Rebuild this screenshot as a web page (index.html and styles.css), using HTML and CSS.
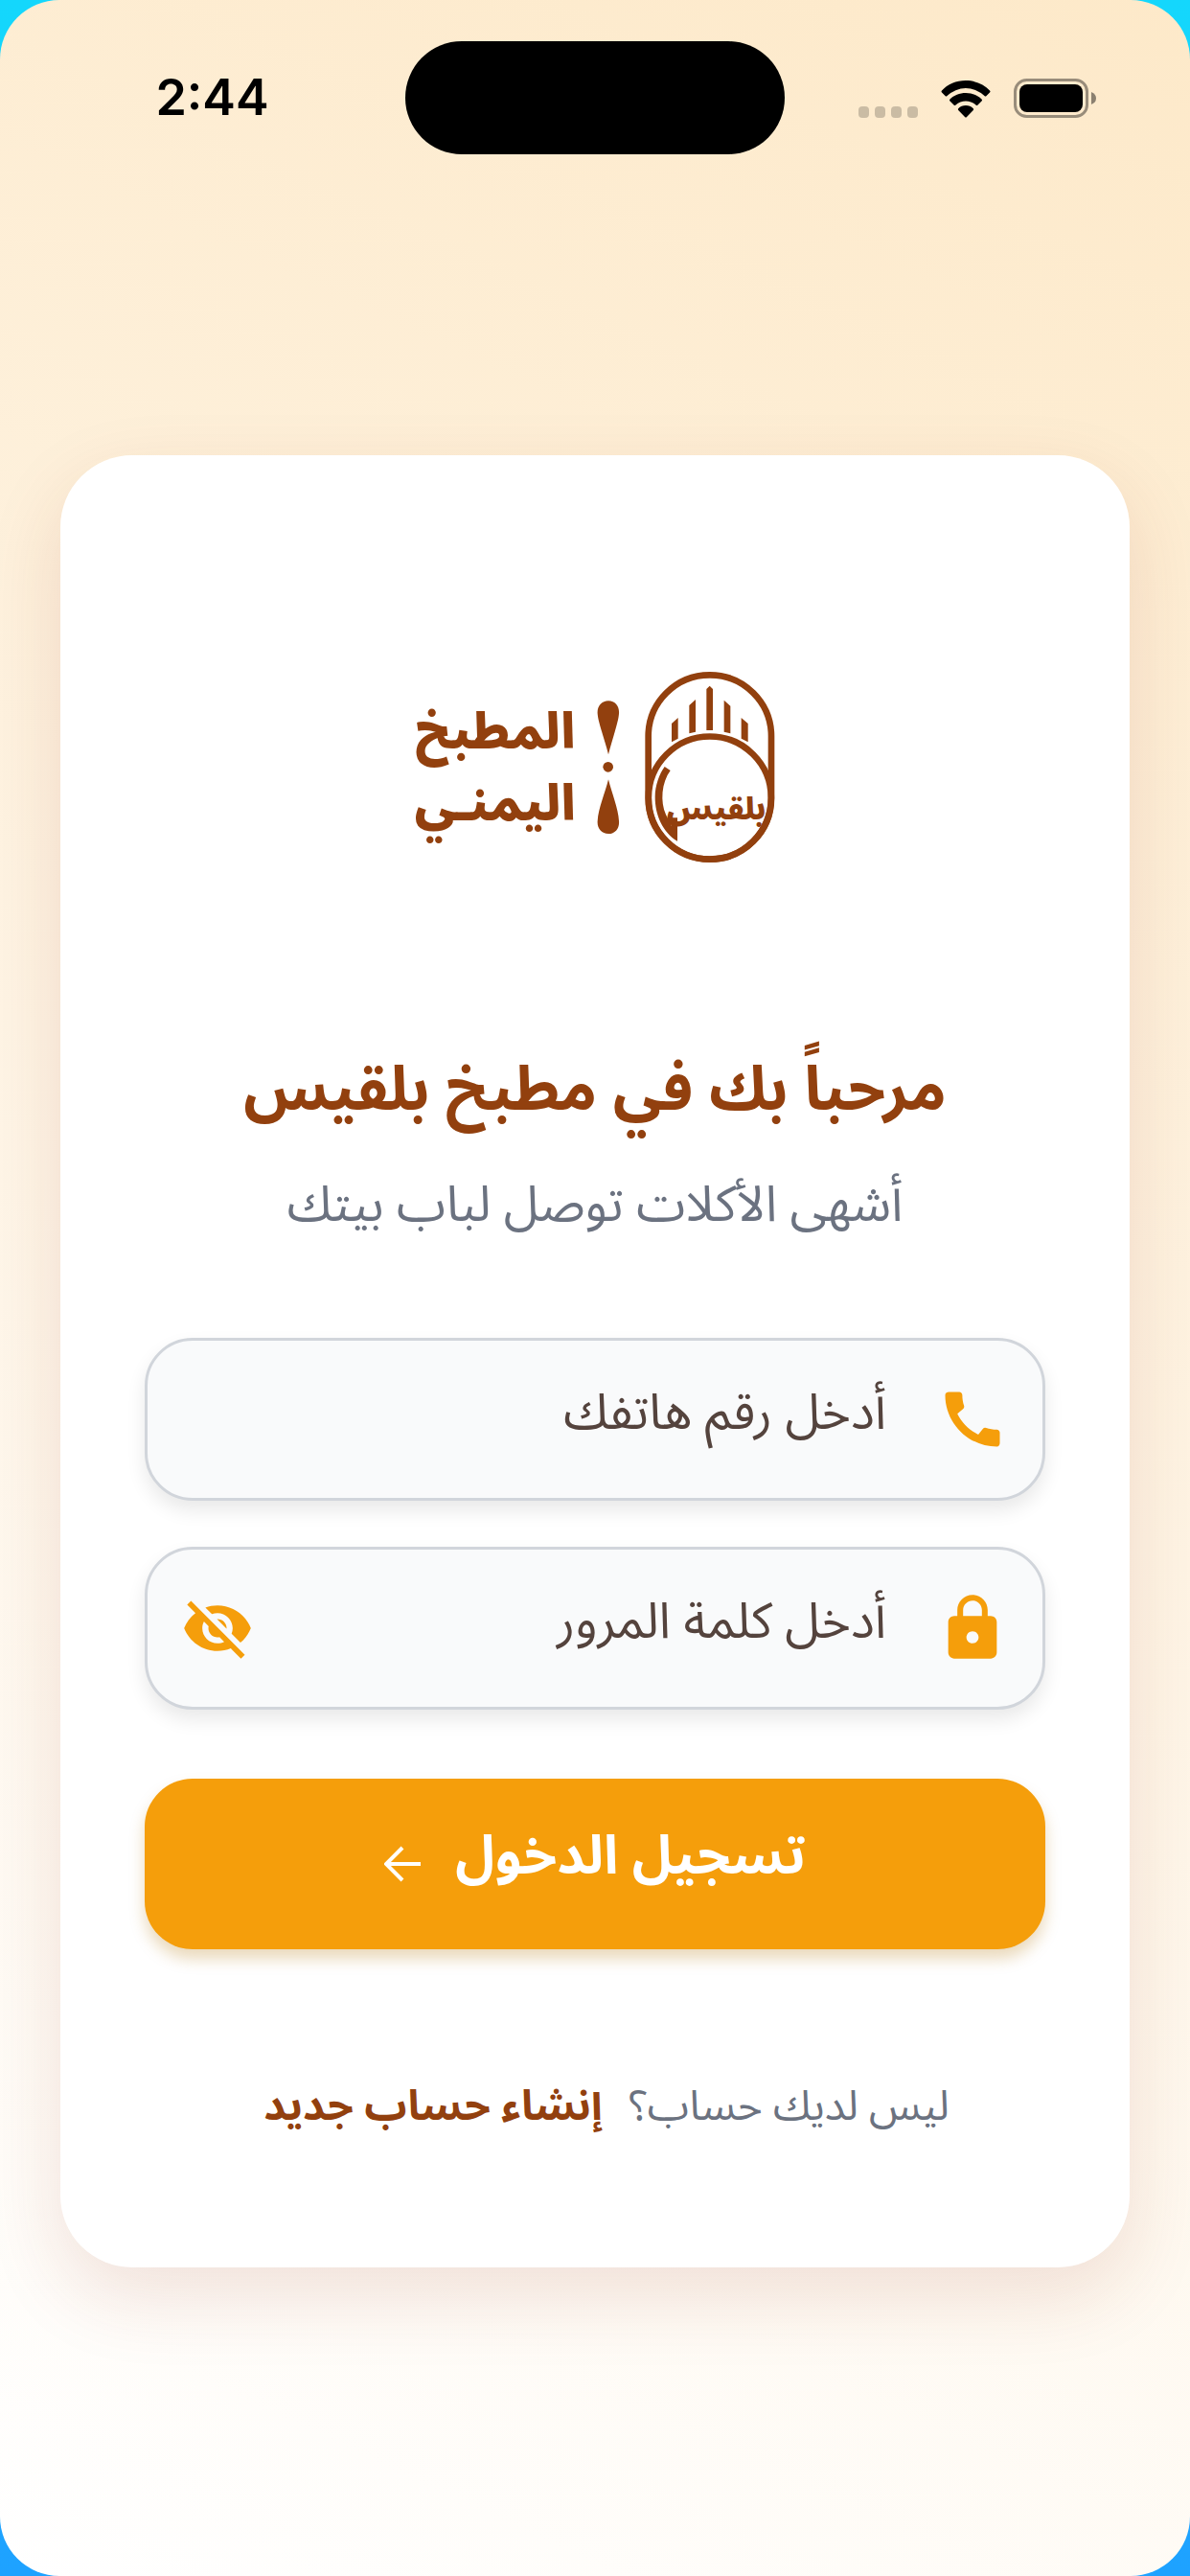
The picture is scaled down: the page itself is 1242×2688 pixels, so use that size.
FILE: index.html
```html
<!DOCTYPE html>
<html lang="ar" dir="rtl">
<head>
<meta charset="utf-8">
<meta name="viewport" content="width=device-width, initial-scale=1">
<title>تسجيل الدخول</title>
<link rel="stylesheet" href="styles.css">
</head>
<body>
<div class="screen">
  <header class="status" dir="ltr">
    <time class="clock">2:44</time>
    <div class="island"></div>
    <div class="indicators">
      <svg class="cell" viewBox="0 0 62 12" aria-hidden="true"><rect width="11" height="12" rx="4"/><rect x="17" width="11" height="12" rx="4"/><rect x="34" width="11" height="12" rx="4"/><rect x="51" width="11" height="12" rx="4"/></svg>
      <svg class="wifi" viewBox="0 0 52 39" aria-hidden="true"><path d="M26 0C36 0 45 4 51 10.500Q52 11.500 51 12.500L47.500 16Q46.500 17 45.500 16A28 28 0 0 0 6.500 16Q5.500 17 4.500 16L1 12.500Q0 11.500 1 10.500C7 4 16 0 26 0Z"/><path d="M26 13C32.500 13 38.500 15.500 42.500 19.500Q43.500 20.500 42.500 21.500L38.500 25.500Q37.500 26.500 36.500 25.500A15.500 15.500 0 0 0 15.500 25.500Q14.500 26.500 13.500 25.500L9.500 21.500Q8.500 20.500 9.500 19.500C13.500 15.500 19.500 13 26 13Z"/><path d="M26 26C29 26 31.800 27.200 33.800 29.200Q34.600 30 33.800 31L27 38Q26 39 25 38L18.200 31Q17.400 30 18.200 29.200C20.200 27.200 23 26 26 26Z"/></svg>
      <svg class="battery" viewBox="0 0 86 41" aria-hidden="true"><rect x="1.500" y="1.500" width="75" height="38" rx="12" fill="none" stroke="#000" stroke-opacity=".4" stroke-width="3"/><rect x="6" y="6" width="66" height="29" rx="8"/><path d="M81 14Q86 16 86 20.500T81 27Z" fill-opacity=".45"/></svg>
    </div>
  </header>

  <main class="card">
    <svg class="logo" viewBox="0 0 1260 720" role="img" aria-label="بلقيس المطبخ اليمني">
      <g class="logo-lines">
        <rect x="797" y="73" width="385" height="577" rx="192"/>
        <circle cx="989.500" cy="457.500" r="192"/>
      </g>
      <path d="M979 117L989 107L999 117V246H979ZM925 168L945 150V251L925 256ZM1054 170L1034 152V251L1054 256ZM870 225L890 207V272L870 283ZM1109 225L1088 207V272L1109 283Z"/>
      <path d="M848 360L866 372C838 410 834 470 852 510Q862 532 870 545V520H888V593C842 566 818 510 818 455C818 418 832 382 848 360Z"/>
      <path d="M672 154C694 154 707 172 705 194C703 222 682 280 672 322C662 280 640 222 638 194C636 172 650 154 672 154ZM672 400C682 442 703 490 705 530C707 552 694 570 672 570C650 570 636 552 638 530C640 490 662 442 672 400Z"/>
      <circle cx="671" cy="361" r="16"/>
      <text class="logo-mark" x="1010" y="524">بلقيس</text>
      <text class="logo-name" x="318" y="302">المطبخ</text>
      <text class="logo-name" x="318" y="528">اليمنـي</text>
    </svg>

    <h1 class="title">مرحباً بك في مطبخ بلقيس</h1>
    <p class="subtitle">أشهى الأكلات توصل لباب بيتك</p>

    <form class="form">
      <div class="field">
        <label class="icon" for="phone"><svg viewBox="0 0 24 24" aria-hidden="true"><path d="M20.010 15.380c-1.230 0-2.420-.2-3.530-.56a.977.977 0 0 0-1.010.24l-1.570 1.970c-2.830-1.350-5.480-3.900-6.890-6.830l1.950-1.660c.27-.28.35-.67.24-1.020-.37-1.110-.56-2.300-.56-3.530 0-.54-.45-.99-.99-.99H4.190C3.650 3 3 3.240 3 3.990 3 13.280 10.730 21 20.010 21c.71 0 .99-.63.99-1.180v-3.450c0-.54-.45-.99-.99-.99z"/></svg></label>
        <input class="input" id="phone" type="tel" dir="rtl" placeholder="أدخل رقم هاتفك" aria-label="أدخل رقم هاتفك">
      </div>
      <div class="field">
        <label class="icon" for="password"><svg viewBox="0 0 24 24" aria-hidden="true"><path d="M18 8h-1V6c0-2.760-2.240-5-5-5S7 3.240 7 6v2H6c-1.100 0-2 .9-2 2v10c0 1.100.9 2 2 2h12c1.100 0 2-.9 2-2V10c0-1.100-.9-2-2-2zm-6 9c-1.100 0-2-.9-2-2s.9-2 2-2 2 .9 2 2-.9 2-2 2zm3.100-9H8.900V6c0-1.710 1.390-3.100 3.100-3.100 1.710 0 3.100 1.390 3.100 3.100v2z"/></svg></label>
        <input class="input" id="password" type="password" placeholder="أدخل كلمة المرور" aria-label="أدخل كلمة المرور">
        <button class="icon" type="button" aria-label="إظهار كلمة المرور"><svg viewBox="0 0 24 24" aria-hidden="true"><path d="M12 7c2.760 0 5 2.240 5 5 0 .65-.13 1.260-.36 1.830l2.920 2.920c1.510-1.260 2.700-2.890 3.430-4.750-1.730-4.390-6-7.500-11-7.500-1.400 0-2.740.25-3.980.7l2.160 2.160C10.740 7.130 11.350 7 12 7zM2 4.270l2.280 2.280.46.46C3.080 8.300 1.780 10.020 1 12c1.730 4.390 6 7.500 11 7.500 1.550 0 3.030-.3 4.380-.84l.42.42L19.730 22 21 20.730 3.270 3 2 4.270zM7.530 9.800l1.550 1.550c-.05.21-.08.43-.08.65 0 1.660 1.340 3 3 3 .22 0 .44-.03.65-.08l1.550 1.550c-.67.33-1.410.53-2.200.53-2.760 0-5-2.240-5-5 0-.79.2-1.530.53-2.200zm4.310-.78l3.150 3.150.02-.16c0-1.660-1.340-3-3-3l-.17.010z"/></svg></button>
      </div>
      <button class="submit" type="submit">
        <span class="submit-text">تسجيل الدخول</span>
        <svg class="arrow" viewBox="0 0 38 38" aria-hidden="true"><path d="M19 2L2 19L19 36M2 19H38"/></svg>
      </button>
    </form>

    <p class="signup"><span>ليس لديك حساب؟</span><a href="#signup">إنشاء حساب جديد</a></p>
  </main>
</div>
</body>
</html>
```
FILE: styles.css
```css
* { box-sizing: border-box; }

body {
  margin: 0;
  background: linear-gradient(#14d7fc, #1ea2ff);
  font-family: "Noto Sans Arabic", "DejaVu Sans", sans-serif;
}

.screen {
  min-height: 100vh;
  padding-bottom: 64px;
  border-radius: 62px;
  background: linear-gradient(205deg, #fde9c9, #fff);
}

.status {
  display: grid;
  grid-template-columns: 1fr 396px 1fr;
  align-items: center;
  padding-top: 43px;
  color: #000;
}
.clock {
  padding-left: 20px;
  text-align: center;
  font: 600 52px/64px Inter, sans-serif;
}
.island {
  height: 118px;
  border-radius: 59px;
  background: #000;
}
.indicators {
  display: flex;
  justify-content: flex-end;
  align-items: flex-end;
  gap: 24px;
  padding-right: 98px;
}
.cell { width: 62px; height: 12px; fill-opacity: .2; }
.wifi { width: 52px; height: 39px; }
.battery { width: 86px; height: 41px; }

.card {
  margin: 314px 63px 0;
  padding: 205px 88px 128px;
  border-radius: 75px;
  background: #fff;
  box-shadow: 0 30px 80px rgba(150, 45, 20, .13);
  text-align: center;
}

.logo {
  display: block;
  width: 420px;
  height: 240px;
  margin: 0 auto;
  fill: #92400e;
  direction: rtl;
}
.logo-lines { fill: none; stroke: #92400e; stroke-width: 20; }
.logo-mark { font-size: 96px; font-weight: 900; text-anchor: middle; }
.logo-name { font-size: 152px; font-weight: 900; text-anchor: middle; }

.title {
  margin: 168px 0 0;
  color: #92400e;
  font-size: 64px;
  font-weight: 700;
  line-height: 100px;
}
.subtitle {
  margin: 30px 0 0;
  color: #6b7280;
  font-size: 52px;
  font-weight: 400;
  line-height: 80px;
}

.form {
  display: grid;
  grid-template-columns: minmax(0, 1fr);
  gap: 48px;
  margin-top: 98px;
}
.field {
  display: flex;
  align-items: center;
  height: 170px;
  padding: 0 35px;
  border: 3px solid #d1d5db;
  border-radius: 50px;
  background: #f9fafb;
  box-shadow: 0 10px 20px rgba(0, 0, 0, .09);
}
.icon {
  flex: none;
  width: 76px;
  height: 76px;
  padding: 0;
  border: 0;
  background: none;
}
.icon svg { display: block; fill: #f59e0b; }
.input {
  flex: 1;
  min-width: 0;
  height: 100%;
  padding: 0 52px 14px;
  border: 0;
  background: none;
  color: #54433d;
  font-family: inherit;
  font-size: 52px;
  font-weight: 400;
}
.input::placeholder { color: #54433d; opacity: 1; }
.submit {
  display: flex;
  justify-content: center;
  align-items: center;
  gap: 36px;
  height: 178px;
  margin-top: 24px;
  border: 0;
  border-radius: 50px;
  background: #f59e0b;
  box-shadow: 0 10px 16px rgba(180, 120, 10, .28);
  color: #fff;
  font-family: inherit;
  font-size: 56px;
  font-weight: 700;
}
.submit-text { padding-bottom: 16px; }
.arrow { width: 38px; height: 38px; fill: none; stroke: #fff; stroke-width: 4; }

.signup {
  display: flex;
  justify-content: center;
  gap: 28px;
  margin: 124px 0 0;
  color: #6b7280;
  font-size: 44px;
  font-weight: 400;
  line-height: 80px;
}
.signup a {
  padding-left: 24px;
  color: #92400e;
  font-weight: 700;
  text-decoration: none;
}
```
